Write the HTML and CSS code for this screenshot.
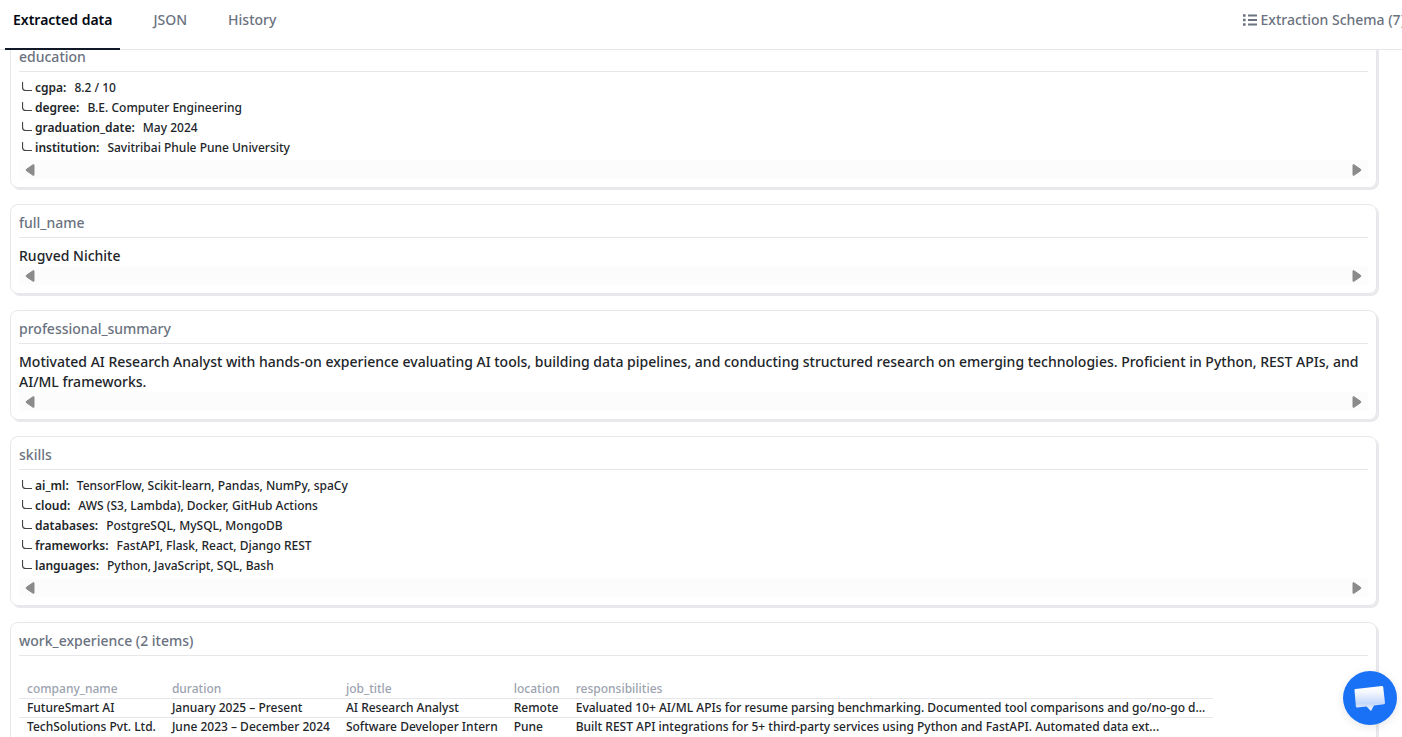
FILE: index.html
```html
<!DOCTYPE html>
<html lang="en">
<head>
<meta charset="utf-8">
<meta name="viewport" content="width=device-width, initial-scale=1">
<title>Extracted data</title>
<link rel="stylesheet" href="styles.css">
</head>
<body>

<svg width="0" height="0" class="defs" aria-hidden="true">
	<symbol id="hook" viewBox="0 0 10 10">
		<path d="M0.5 0V5Q0.5 8.5 4 8.5H10" fill="none" stroke="#444" stroke-width="1.2"/>
	</symbol>
	<symbol id="arrow-left" viewBox="0 0 10 12">
		<path d="M9 0.8V11.2H8L1.5 6.8Q0.6 6 1.5 5.2L8 0.8Z" fill="#8b8b8b" stroke="#8b8b8b" stroke-linejoin="round"/>
	</symbol>
	<symbol id="arrow-right" viewBox="0 0 10 12">
		<path d="M1 0.8V11.2H2L8.5 6.8Q9.4 6 8.5 5.2L2 0.8Z" fill="#8b8b8b" stroke="#8b8b8b" stroke-linejoin="round"/>
	</symbol>
</svg>

<header class="topbar">
	<nav class="tabs">
		<button type="button" class="tab active">Extracted data</button>
		<button type="button" class="tab">JSON</button>
		<button type="button" class="tab">History</button>
	</nav>
	<a class="schema-link" href="#schema">
		<svg width="14" height="14" viewBox="0 0 14 14" aria-hidden="true">
			<path d="M5 2.5H14M5 7H14M5 11.5H14" stroke="currentColor" stroke-width="1.8"/>
			<path d="M0 1.2H2.6V3.8H0ZM0 5.7H2.6V8.3H0ZM0 10.2H2.6V12.8H0Z" fill="currentColor"/>
		</svg>
		<span>Extraction Schema (7)</span>
	</a>
</header>

<main class="results">
	<div class="cards">

		<section class="card">
			<h2>education</h2>
			<ul class="fields">
				<li><svg class="hook"><use href="#hook"/></svg><b>cgpa:</b><span>8.2 / 10</span></li>
				<li><svg class="hook"><use href="#hook"/></svg><b>degree:</b><span>B.E. Computer Engineering</span></li>
				<li><svg class="hook"><use href="#hook"/></svg><b>graduation_date:</b><span>May 2024</span></li>
				<li><svg class="hook"><use href="#hook"/></svg><b>institution:</b><span>Savitribai Phule Pune University</span></li>
			</ul>
			<div class="scrollbar">
				<button type="button" aria-label="Scroll left"><svg><use href="#arrow-left"/></svg></button>
				<button type="button" aria-label="Scroll right"><svg><use href="#arrow-right"/></svg></button>
			</div>
		</section>

		<section class="card">
			<h2>full_name</h2>
			<p>Rugved Nichite</p>
			<div class="scrollbar">
				<button type="button" aria-label="Scroll left"><svg><use href="#arrow-left"/></svg></button>
				<button type="button" aria-label="Scroll right"><svg><use href="#arrow-right"/></svg></button>
			</div>
		</section>

		<section class="card">
			<h2>professional_summary</h2>
			<p>Motivated AI Research Analyst with hands-on experience evaluating AI tools, building data pipelines, and conducting structured research on emerging technologies. Proficient in Python, REST APIs, and AI/ML frameworks.</p>
			<div class="scrollbar">
				<button type="button" aria-label="Scroll left"><svg><use href="#arrow-left"/></svg></button>
				<button type="button" aria-label="Scroll right"><svg><use href="#arrow-right"/></svg></button>
			</div>
		</section>

		<section class="card">
			<h2>skills</h2>
			<ul class="fields">
				<li><svg class="hook"><use href="#hook"/></svg><b>ai_ml:</b><span>TensorFlow, Scikit-learn, Pandas, NumPy, spaCy</span></li>
				<li><svg class="hook"><use href="#hook"/></svg><b>cloud:</b><span>AWS (S3, Lambda), Docker, GitHub Actions</span></li>
				<li><svg class="hook"><use href="#hook"/></svg><b>databases:</b><span>PostgreSQL, MySQL, MongoDB</span></li>
				<li><svg class="hook"><use href="#hook"/></svg><b>frameworks:</b><span>FastAPI, Flask, React, Django REST</span></li>
				<li><svg class="hook"><use href="#hook"/></svg><b>languages:</b><span>Python, JavaScript, SQL, Bash</span></li>
			</ul>
			<div class="scrollbar">
				<button type="button" aria-label="Scroll left"><svg><use href="#arrow-left"/></svg></button>
				<button type="button" aria-label="Scroll right"><svg><use href="#arrow-right"/></svg></button>
			</div>
		</section>

		<section class="card">
			<h2>work_experience (2 items)</h2>
			<table class="items">
				<thead>
					<tr>
						<th>company_name</th>
						<th>duration</th>
						<th>job_title</th>
						<th>location</th>
						<th>responsibilities</th>
					</tr>
				</thead>
				<tbody>
					<tr>
						<td>FutureSmart AI</td>
						<td>January 2025 – Present</td>
						<td>AI Research Analyst</td>
						<td>Remote</td>
						<td>Evaluated 10+ AI/ML APIs for resume parsing benchmarking. Documented tool comparisons and go/no-go d...</td>
					</tr>
					<tr>
						<td>TechSolutions Pvt. Ltd.</td>
						<td>June 2023 – December 2024</td>
						<td>Software Developer Intern</td>
						<td>Pune</td>
						<td>Built REST API integrations for 5+ third-party services using Python and FastAPI. Automated data ext...</td>
					</tr>
				</tbody>
			</table>
			<div class="scrollbar">
				<button type="button" aria-label="Scroll left"><svg><use href="#arrow-left"/></svg></button>
				<button type="button" aria-label="Scroll right"><svg><use href="#arrow-right"/></svg></button>
			</div>
		</section>

	</div>
</main>

<button type="button" class="chat" aria-label="Open chat">
	<svg width="54" height="54" viewBox="0 0 54 54" aria-hidden="true">
		<defs>
			<linearGradient id="bubble" x1="0" y1="0" x2="0" y2="1">
				<stop offset="0" stop-color="#fff"/>
				<stop offset="0.25" stop-color="#f3f7fe"/>
				<stop offset="0.7" stop-color="#c4d8fb"/>
				<stop offset="1" stop-color="#f3f7fe"/>
			</linearGradient>
		</defs>
		<path d="M12.5 18L39 15Q40 15 40.200 16L42 32Q42 33 41 33.200L31 34.500L28 40L23.500 35.500L14 36.500Q13 36.500 12.900 35.500L11.500 19Q11.500 18 12.500 18Z" fill="url(#bubble)"/>
	</svg>
</button>

</body>
</html>
```
FILE: styles.css
```css
* {
	box-sizing: border-box;
}

html, body {
	height: 100%;
	margin: 0;
}

body {
	display: flex;
	flex-direction: column;
	overflow: hidden;
	background: #fff;
	color: #212529;
	font-family: "Noto Sans", sans-serif;
	font-size: 14px;
	font-weight: 500;
	line-height: 20px;
}

button {
	padding: 0;
	border: 0;
	background: none;
	font: inherit;
	cursor: pointer;
}

.defs {
	position: absolute;
}

/* top bar */
.topbar {
	display: flex;
	flex: none;
	justify-content: space-between;
	height: 50px;
	padding-left: 5px;
	border-bottom: 1px solid #e5e7eb;
}

.tabs {
	display: flex;
	gap: 25px;
	height: 50px;
}

.tab {
	padding: 0 8px 8px;
	border-bottom: 2px solid transparent;
	color: #6b7280;
}

.tab.active {
	border-color: #111827;
	color: #030712;
	font-weight: 600;
}

.schema-link {
	display: flex;
	align-items: center;
	gap: 4px;
	height: 40px;
	margin-right: -3px;
	color: #6b7280;
	text-decoration: none;
	white-space: nowrap;
}

/* result cards */
.results {
	flex: 1;
	min-height: 0;
	overflow: hidden;
}

.cards {
	display: flex;
	flex-direction: column;
	gap: 16px;
	margin: -12px 25px 0 10px;
}

.card {
	padding: 8px;
	border: 1px solid #e5e7eb;
	border-radius: 8px;
	box-shadow: 2px 2px 0 #e9e9eb;
}

.card h2 {
	margin: 0 0 8px;
	padding-bottom: 4px;
	border-bottom: 1px solid #e5e7eb;
	color: #6b7280;
	font-size: 14px;
	font-weight: 500;
}

.card p {
	margin: 0;
}

.fields {
	margin: 0;
	padding: 0;
	list-style: none;
	font-size: 12px;
	line-height: 16px;
}

.fields li {
	display: flex;
	margin-bottom: 4px;
	padding-left: 3px;
}

.fields b {
	margin-right: 8px;
	font-weight: 600;
}

.hook {
	flex: none;
	width: 10px;
	height: 10px;
	margin: 2px 3px 0 0;
}

.scrollbar {
	display: flex;
	align-items: center;
	justify-content: space-between;
	height: 19px;
	padding: 0 6px;
	background: #fcfcfc;
}

.scrollbar button,
.scrollbar svg {
	display: block;
	width: 10px;
	height: 12px;
}

.items {
	margin-top: 24px;
	border-collapse: collapse;
	font-size: 12px;
	line-height: 18px;
	white-space: nowrap;
}

.items th,
.items td {
	padding: 0 8px;
	text-align: left;
}

.items th {
	color: #9ca3af;
	font-weight: 500;
}

.items tbody tr {
	border-top: 1px solid #e5e7eb;
}

/* chat launcher */
.chat {
	position: fixed;
	right: 5px;
	bottom: 12px;
	width: 54px;
	height: 54px;
	border-radius: 50%;
	background: #1972f5;
	box-shadow: 0 2px 10px rgba(0, 0, 0, 0.1);
}

.chat svg {
	display: block;
}
```
